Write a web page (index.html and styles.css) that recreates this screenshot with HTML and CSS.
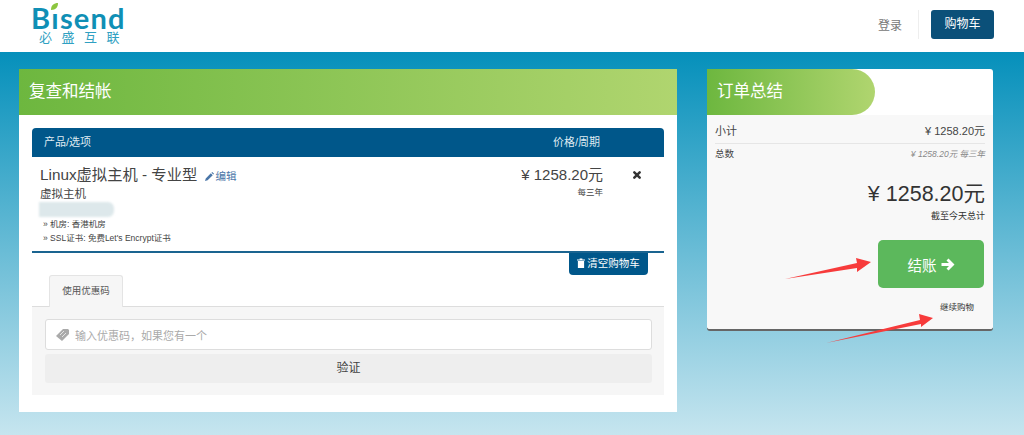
FILE: index.html
```html
<!DOCTYPE html>
<html lang="zh">
<head>
  <meta charset="UTF-8">
  <meta name="viewport" content="width=device-width, initial-scale=1.0">
  <title>复查和结帐</title>
  <link rel="stylesheet" href="styles.css">
</head>
<body>
  <header class="topbar">
    <div class="logo">
      <div class="logo-word"><span>B</span><span class="logo-i">ı<svg class="logo-leaf" width="7" height="7" viewBox="0 0 7 7"><path d="M0 7C0 2 3 0 7 0C7 4 5 7 0 7Z" fill="#8cc63f"/></svg></span><span>send</span></div>
      <div class="logo-cn">必盛互联</div>
    </div>
    <nav class="topnav">
      <a class="login-link">登录</a>
      <span class="nav-sep"></span>
      <a class="cart-button">购物车</a>
    </nav>
  </header>

  <main class="page">
    <section class="card review">
      <h2 class="card-title">复查和结帐</h2>
      <div class="review-body">
        <div class="items-head">
          <span>产品/选项</span>
          <span class="head-price">价格/周期</span>
        </div>
        <div class="item">
          <div class="item-info">
            <div class="item-name">Linux虚拟主机 - 专业型
              <a class="edit-link">
                <svg width="9" height="9" viewBox="0 0 12 12"><path d="M0 12L1 8.5L7.8 1.7L10.3 4.2L3.5 11ZM8.6 0.9L9.3 0.2Q9.6 0 10 0.2L11.8 2Q12 2.4 11.8 2.7L11.1 3.4Z" fill="#4a76a8"/></svg>编辑</a>
            </div>
            <div class="item-group">虚拟主机</div>
            <div class="item-blur"></div>
            <div class="item-opt">» 机房: 香港机房</div>
            <div class="item-opt">» SSL证书: 免费Let's Encrypt证书</div>
          </div>
          <div class="item-price">
            <div class="price-main">¥ 1258.20元</div>
            <div class="price-cycle">每三年</div>
          </div>
          <div class="item-remove">
            <svg width="8" height="8" viewBox="0 0 9 9"><path d="M1.5 1.5L7.5 7.5M7.5 1.5L1.5 7.5" stroke="#333" stroke-width="2.8" stroke-linecap="round"/></svg>
          </div>
        </div>
        <div class="clear-row">
          <a class="clear-button">
            <svg width="8" height="10" viewBox="0 0 9 11"><path d="M0 1.5H3V0.4H6V1.5H9V2.6H0ZM1 3.2H8V11H1Z" fill="#fff"/></svg>清空购物车</a>
        </div>
        <div class="tabs">
          <span class="tab">使用优惠码</span>
        </div>
        <div class="promo">
          <div class="promo-input">
            <svg width="13" height="12" viewBox="0 0 13 12"><path d="M0 7L7 0H12L13 1V5L6 12Z" fill="#aaa"/><path d="M4 6L8 2M6 8L10 4" stroke="#f2f2f2" stroke-width="0.8"/></svg>
            <span>输入优惠码，如果您有一个</span>
          </div>
          <div class="promo-button">验证</div>
        </div>
      </div>
    </section>

    <aside class="card summary">
      <h2 class="card-title summary-title">订单总结</h2>
      <div class="summary-body">
        <div class="sum-row sum-sub"><span>小计</span><span class="sum-val">¥ 1258.20元</span></div>
        <div class="sum-row sum-total"><span>总数</span><em>¥ 1258.20元 每三年</em></div>
        <div class="grand">¥ 1258.20元</div>
        <div class="grand-note">截至今天总计</div>
        <div class="checkout-row">
          <a class="checkout">结账
            <svg width="14" height="13" viewBox="0 0 14 13"><path d="M7.5 0.5L13.5 6.5L7.5 12.5L5.5 10.5L8 8H0.5V5H8L5.5 2.5Z" fill="#fff"/></svg>
          </a>
        </div>
        <div class="continue">继续购物</div>
      </div>
    </aside>
  </main>

  <!-- annotation arrows drawn over the shot -->
  <svg class="arrow-layer" width="1024" height="435" viewBox="0 0 1024 435">
    <path d="M785 279L857 263L856 258L871 262L857 272L857 268Z" fill="#f73b3b"/>
    <path d="M826 343L920 320L919 314L933 318L921 327L921 324Z" fill="#f73b3b"/>
  </svg>
</body>
</html>
```

FILE: styles.css
```css
* {
  box-sizing: border-box;
}

html, body {
  margin: 0;
  height: 435px;
  overflow: hidden;
}

body {
  position: relative;
  background: linear-gradient(#0590bb 52px, #c6e5ef 435px);
  font-family: "Liberation Sans", "Noto Sans CJK SC", sans-serif;
  color: #333;
}

.topbar {
  height: 52px;
  background-color: #fff;
  display: flex;
  justify-content: space-between;
  padding: 0 30px 0 31px;
}

.logo {
  width: 100px;
  color: #0f8fb5;
}

.logo-word {
  display: flex;
  font-family: "Lato", sans-serif;
  font-weight: 700;
  font-size: 29px;
  letter-spacing: 1.2px;
  line-height: 35px;
  height: 31px;
}

.logo-i {
  position: relative;
}

.logo-leaf {
  position: absolute;
  left: 0;
  top: 3px;
}

.logo-cn {
  font-size: 13px;
  line-height: 14px;
  letter-spacing: 9.5px;
  padding-left: 8px;
  color: #2fa0c2;
  white-space: nowrap;
}

.topnav {
  display: flex;
  align-items: center;
  padding-bottom: 3px;
}

.login-link {
  font-size: 12px;
  color: #777;
  margin-right: 16px;
}

.nav-sep {
  width: 1px;
  height: 29px;
  background-color: #eee;
  margin-right: 12px;
}

.cart-button {
  width: 63px;
  height: 29px;
  line-height: 29px;
  text-align: center;
  background-color: #0b5079;
  border-radius: 3px;
  color: #fff;
  font-size: 12px;
}

.page {
  display: flex;
  gap: 30px;
  padding: 17px 31px 0 19px;
  align-items: flex-start;
}

.card {
  background-color: #fff;
}

.review {
  width: 658px;
  height: 343px;
}

.card-title {
  margin: 0;
  height: 46px;
  line-height: 44px;
  padding-left: 10px;
  font-size: 16.5px;
  font-weight: 400;
  color: #fff;
  background: linear-gradient(to right, #6db73f, #b0d56f);
}

.review-body {
  padding: 13px 13px 0;
}

.items-head {
  height: 29px;
  background-color: #00578a;
  border-radius: 4px 4px 0 0;
  color: #dfeaf1;
  font-size: 11px;
  line-height: 28px;
  padding-left: 12px;
  display: flex;
}

.head-price {
  margin-left: 462px;
}

.item {
  height: 96px;
  border-bottom: 2px solid #1a6490;
  display: flex;
  padding: 8px 0 0 8px;
}

.item-info {
  width: 470px;
}

.item-name {
  font-size: 15.3px;
  line-height: 20px;
  color: #444;
}

.edit-link {
  font-size: 10.5px;
  color: #4a76a8;
  margin-left: 3px;
}

.edit-link svg {
  vertical-align: -1px;
  margin-right: 2px;
}

.item-group {
  font-size: 11.5px;
  line-height: 16px;
  color: #444;
}

.item-blur {
  width: 75px;
  height: 15px;
  margin-left: -1px;
  background-color: #dde8eb;
  border-radius: 0 6px 6px 0;
  filter: blur(1px);
}

.item-opt {
  font-size: 8.5px;
  line-height: 14px;
  color: #444;
  padding-left: 3px;
}

.item-price {
  width: 93px;
  text-align: right;
}

.price-main {
  font-size: 15px;
  line-height: 20px;
  color: #444;
}

.price-cycle {
  font-size: 8.5px;
  line-height: 14px;
  color: #444;
}

.item-remove {
  margin-left: 30px;
}

.clear-row {
  display: flex;
  justify-content: flex-end;
  padding-right: 16px;
  height: 22px;
}

.clear-button {
  width: 79px;
  height: 22px;
  background-color: #00578a;
  border-radius: 0 0 4px 4px;
  color: #fff;
  font-size: 10.5px;
  line-height: 21px;
  text-align: center;
  white-space: nowrap;
}

.clear-button svg {
  vertical-align: -1px;
  margin-right: 2px;
}

.tabs {
  height: 32px;
  padding-left: 17px;
  border-bottom: 1px solid #ddd;
}

.tab {
  display: block;
  width: 74px;
  height: 32px;
  line-height: 30px;
  text-align: center;
  background-color: #f6f6f6;
  border: 1px solid #e4e4e4;
  border-bottom: none;
  border-radius: 3px 3px 0 0;
  font-size: 9.5px;
  color: #555;
}

.promo {
  height: 88px;
  background-color: #f6f6f6;
  padding: 12px 12px 0 13px;
}

.promo-input {
  height: 31px;
  background-color: #fff;
  border: 1px solid #ddd;
  border-radius: 3px;
  display: flex;
  align-items: center;
  gap: 6px;
  padding-left: 10px;
  font-size: 11px;
  color: #aaa;
}

.promo-button {
  height: 29px;
  margin-top: 4px;
  background-color: #eee;
  border-radius: 3px;
  text-align: center;
  line-height: 29px;
  font-size: 12px;
  color: #444;
}

.summary {
  width: 286px;
  height: 260px;
  border-radius: 3px;
  box-shadow: 0 2px 0 #666;
}

.summary-title {
  width: 168px;
  border-radius: 0 23px 23px 0;
}

.summary-body {
  height: 214px;
  background-color: #f8f8f8;
  border-radius: 0 0 3px 3px;
  padding: 0 8px;
}

.sum-row {
  display: flex;
  justify-content: space-between;
}

.sum-sub {
  height: 29px;
  line-height: 32px;
  font-size: 11px;
  color: #444;
  border-bottom: 1px solid #e6e6e6;
}

.sum-total {
  line-height: 20px;
  font-size: 9.5px;
  color: #444;
}

.sum-total em {
  font-size: 8.5px;
  color: #888;
}

.grand {
  margin-top: 16px;
  text-align: right;
  font-size: 21.5px;
  line-height: 28px;
  color: #333;
}

.grand-note {
  text-align: right;
  font-size: 9px;
  line-height: 12px;
  color: #333;
  margin-top: 2px;
}

.checkout-row {
  display: flex;
  justify-content: flex-end;
  padding-right: 1px;
  margin-top: 18px;
}

.checkout {
  width: 106px;
  height: 48px;
  display: flex;
  align-items: center;
  justify-content: center;
  gap: 4px;
  background-color: #5cb85c;
  border-radius: 5px;
  color: #fff;
  font-size: 14.5px;
}

.continue {
  margin-top: 13px;
  text-align: right;
  padding-right: 11px;
  font-size: 8.5px;
  line-height: 12px;
  color: #333;
}

.arrow-layer {
  position: absolute;
  left: 0;
  top: 0;
  pointer-events: none;
}
```
